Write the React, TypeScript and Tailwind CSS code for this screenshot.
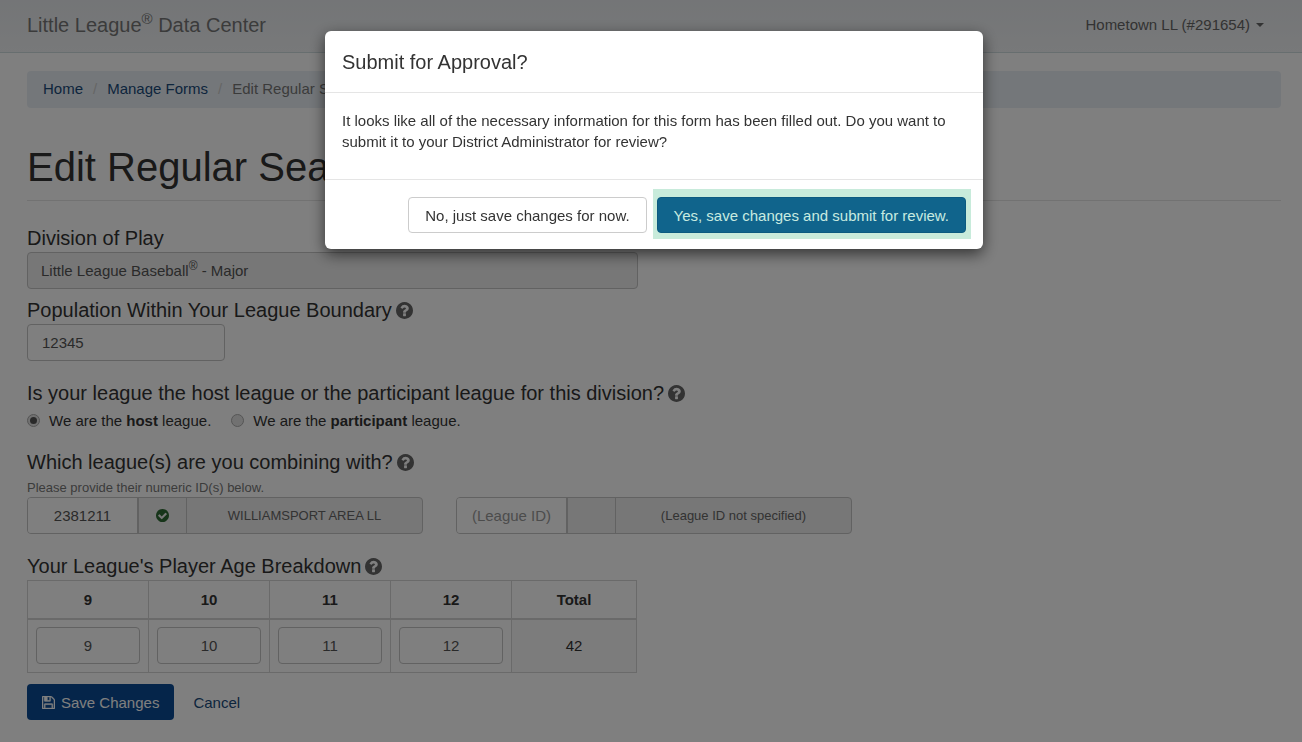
import { useState, type ReactNode } from 'react';

type IconProps = { className?: string };

const DISC =
  'm252 162q0 209-103 385.500t-279.500 279.500-385.500 103-385.500-103-279.500-279.500-103-385.500 103-385.500 279.500-279.500 385.500-103 385.500 103 279.500 279.500 103 385.500z';

function HelpIcon({ className = '' }: IconProps) {
  return (
    <svg viewBox="128 128 1536 1536" fill="currentColor" aria-hidden="true" className={className}>
      <path d="M1024 1376v-192q0-14-9-23t-23-9h-192q-14 0-23 9t-9 23v192q0 14 9 23t23 9h192q14 0 23-9t9-23zm256-672q0-88-55.500-163t-138.500-116-170-41q-243 0-371 213-15 24 8 42l132 100q7 6 19 6 16 0 25-12 53-68 86-92 34-24 86-24 48 0 85.500 26t37.500 59q0 38-20 61t-68 45q-63 28-115.500 86.500t-52.500 125.500v36q0 14 9 23t23 9h192q14 0 23-9t9-23q0-19 21.500-49.500t54.500-49.500q32-18 49-28.500t46-35 44.500-48 28-60.500 12.500-81zm384 192q0 209-103 385.500t-279.500 279.500-385.500 103-385.500-103-279.500-279.500-103-385.500 103-385.500 279.500-279.500 385.500-103 385.500 103 279.500 279.500 103 385.500z" />
    </svg>
  );
}

function CheckIcon({ className = '' }: IconProps) {
  return (
    <svg viewBox="128 128 1536 1536" fill="currentColor" aria-hidden="true" className={className}>
      <path
        d={
          'M1412 734q0-28-18-46l-91-90q-19-19-45-19t-45 19l-408 407-226-226q-19-19-45-19t-45 19l-91 90q-18 18-18 46 0 27 18 45l362 362q19 19 45 19 27 0 46-19l543-543q18-18 18-45z' +
          DISC
        }
      />
    </svg>
  );
}

function SaveIcon({ className = '' }: IconProps) {
  return (
    <svg viewBox="128 128 1536 1536" fill="currentColor" stroke="currentColor" strokeWidth="40" aria-hidden="true" className={className}>
      <path d="M512 1536h768v-384h-768v384zm896 0h128v-896q0-14-10-38.500t-20-34.500l-281-281q-10-10-34-20t-39-10v416q0 40-28 68t-68 28h-576q-40 0-68-28t-28-68v-416h-128v1280h128v-416q0-40 28-68t68-28h832q40 0 68 28t28 68v416zm-384-928v-320q0-13-9.500-22.500t-22.500-9.500h-192q-13 0-22.500 9.500t-9.500 22.500v320q0 13 9.500 22.500t22.500 9.500h192q13 0 22.500-9.500t9.500-22.500zm640 32v928q0 40-28 68t-68 28h-1344q-40 0-68-28t-28-68v-1344q0-40 28-68t68-28h928q40 0 88 20t76 48l280 280q28 28 48 76t20 88z" />
    </svg>
  );
}

const FIELD = 'h-[37px] rounded border border-[#c4c4c4] bg-white text-[15px] text-[#555] outline-none';

function FieldTitle({ children, help }: { children: ReactNode; help?: boolean }) {
  return (
    <span className="flex items-center gap-1 text-xl leading-7">
      {children}
      {help && <HelpIcon className="size-[17px] text-[#666]" />}
    </span>
  );
}

type LeagueProps = { id: string; label: string; value: string; name: string; valid?: boolean };

function LeagueLookup({ id, label, value, name, valid }: LeagueProps) {
  return (
    <div className="flex h-[37px] w-full max-w-[396px] overflow-hidden rounded border border-[#c4c4c4] bg-[#eee] text-[#666]">
      <input
        id={id}
        aria-label={label}
        defaultValue={value}
        placeholder="(League ID)"
        className="w-[111px] border-r-2 border-[#c4c4c4] bg-white text-center text-[15px] text-[#555] outline-none placeholder:text-[#999]"
      />
      <span className="flex w-12 items-center justify-center border-r border-[#c4c4c4]">
        {valid && <CheckIcon className="size-[13px] text-[#2f6b35]" />}
      </span>
      <span className="flex flex-1 items-center justify-center text-[13px]">{name}</span>
    </div>
  );
}

const AGES = [9, 10, 11, 12];

export default function App() {
  const [role, setRole] = useState('host');

  return (
    <div className="min-h-screen bg-white font-['Liberation_Sans',Arial,sans-serif] text-[15px] leading-[21px] text-[#333]">
      <header className="flex h-[53px] items-center justify-between border-b border-[#cfdcdf] bg-linear-to-b from-[#e8ebee] to-[#f0f2f4] pr-[38px] pb-[3px] pl-[27px] text-[#666]">
        <a href="#home" className="text-xl text-[#777]">
          Little League<sup className="text-[15px]">®</sup> Data Center
        </a>
        <button type="button" className="flex items-center gap-1.5">
          Hometown LL (#291654)
          <span className="border-x-4 border-t-4 border-x-transparent border-t-current" />
        </button>
      </header>

      <main className="pt-[18px] pr-[21px] pl-[27px]">
        <nav aria-label="Breadcrumb" className="rounded bg-[#e9eff5] px-4 pt-[7px] pb-[9px]">
          <ol className="flex gap-2.5">
            <li><a href="#home" className="text-[#1a4a7a]">Home</a></li>
            <li aria-hidden="true" className="text-[#ccc]">/</li>
            <li><a href="#forms" className="text-[#1a4a7a]">Manage Forms</a></li>
            <li aria-hidden="true" className="text-[#ccc]">/</li>
            <li className="text-[#777]">Edit Regular Season Combined Teams</li>
          </ol>
        </nav>

        <h1 className="mt-[37px] border-b border-[#e4e4e4] pb-2.5 text-[40px] leading-[45px]">
          Edit Regular Season Combined Teams
        </h1>

        <form className="mt-[23px]" onSubmit={(e) => e.preventDefault()}>
          <FieldTitle>Division of Play</FieldTitle>
          <div className="flex h-[37px] w-full max-w-[611px] items-center rounded border border-[#c4c4c4] bg-[#eee] px-[13px] text-[#555]">
            <span>
              Little League Baseball<sup className="text-xs">®</sup> - Major
            </span>
          </div>

          <label htmlFor="population" className="mt-[7px] block">
            <FieldTitle help>Population Within Your League Boundary</FieldTitle>
          </label>
          <input id="population" defaultValue="12345" className={`${FIELD} block w-[198px] px-3.5`} />

          <fieldset className="mt-[18px]">
            <legend>
              <FieldTitle help>Is your league the host league or the participant league for this division?</FieldTitle>
            </legend>
            <div className="flex h-[27px] gap-5 pt-0.5">
              {['host', 'participant'].map((r) => (
                <label key={r} className="flex h-[22px] items-center gap-[9px]">
                  <input
                    type="radio"
                    name="role"
                    checked={role === r}
                    onChange={() => setRole(r)}
                    className="grid size-[13px] appearance-none place-items-center rounded-full border border-[#aaa] bg-[#e2e2e2] before:size-[7px] before:rounded-full checked:before:bg-[#555]"
                  />
                  <span>
                    We are the <b>{r}</b> league.
                  </span>
                </label>
              ))}
            </div>
          </fieldset>

          <div className="mt-3.5">
            <FieldTitle help>Which league(s) are you combining with?</FieldTitle>
          </div>
          <p className="pt-0.5 text-[13px] leading-[19px] text-[#777]">Please provide their numeric ID(s) below.</p>
          <div className="flex gap-[33px]">
            <LeagueLookup id="league1" label="First league ID" value="2381211" name="WILLIAMSPORT AREA LL" valid />
            <LeagueLookup id="league2" label="Second league ID" value="" name="(League ID not specified)" />
          </div>

          <div className="mt-[18px]">
            <FieldTitle help>Your League's Player Age Breakdown</FieldTitle>
          </div>
          <table className="w-full max-w-[610px] table-fixed border-collapse text-center">
            <thead>
              <tr className="h-[38px]">
                {AGES.map((age) => (
                  <th key={age} scope="col" className="w-[121px] border border-b-2 border-[#d4d4d4]">{age}</th>
                ))}
                <th scope="col" className="border border-b-2 border-[#d4d4d4]">Total</th>
              </tr>
            </thead>
            <tbody>
              <tr className="h-[54px]">
                {AGES.map((age) => (
                  <td key={age} className="border border-[#d4d4d4] px-2">
                    <input
                      aria-label={`Players aged ${age}`}
                      defaultValue={age}
                      className={`${FIELD} mx-auto block w-[104px] text-center`}
                    />
                  </td>
                ))}
                <td className="border border-[#d4d4d4] bg-[#f9f9f9]">42</td>
              </tr>
            </tbody>
          </table>

          <div className="mt-[11px] flex items-center gap-[19px]">
            <button type="submit" className="flex h-9 items-center gap-1.5 rounded bg-[#0a4a94] px-[15px] text-white">
              <SaveIcon className="size-[13px]" />
              Save Changes
            </button>
            <a href="#forms" className="text-[#1a4a7a]">Cancel</a>
          </div>
        </form>
      </main>

      <div className="fixed inset-0 flex items-start justify-center bg-black/50 pt-[31px] pr-[21px] pl-[27px]">
        <section
          role="dialog"
          aria-modal="true"
          aria-labelledby="dialog-title"
          className="w-full max-w-[658px] rounded-md bg-white shadow-[0_5px_15px_rgba(0,0,0,0.6)]"
        >
          <h2 id="dialog-title" className="border-b border-[#e5e5e5] px-[17px] pt-[17px] pb-4 text-xl leading-7">
            Submit for Approval?
          </h2>
          <p className="px-[17px] pt-[17px] pb-[27px]">
            It looks like all of the necessary information for this form has been filled out. Do you want to submit it to
            your District Administrator for review?
          </p>
          <div className="flex justify-end gap-2.5 border-t border-[#e5e5e5] px-[17px] pt-[17px] pb-4">
            <button type="button" className="h-9 rounded border border-[#ccc] bg-white px-4">
              No, just save changes for now.
            </button>
            <div className="relative">
              <span className="absolute -top-2 -right-[5px] -bottom-1.5 -left-1 bg-[#c8ebdb]" />
              <button type="button" className="relative h-9 rounded border border-[#0c5a80] bg-[#10648c] px-4 text-[#c8ebe0]">
                Yes, save changes and submit for review.
              </button>
            </div>
          </div>
        </section>
      </div>
    </div>
  );
}
